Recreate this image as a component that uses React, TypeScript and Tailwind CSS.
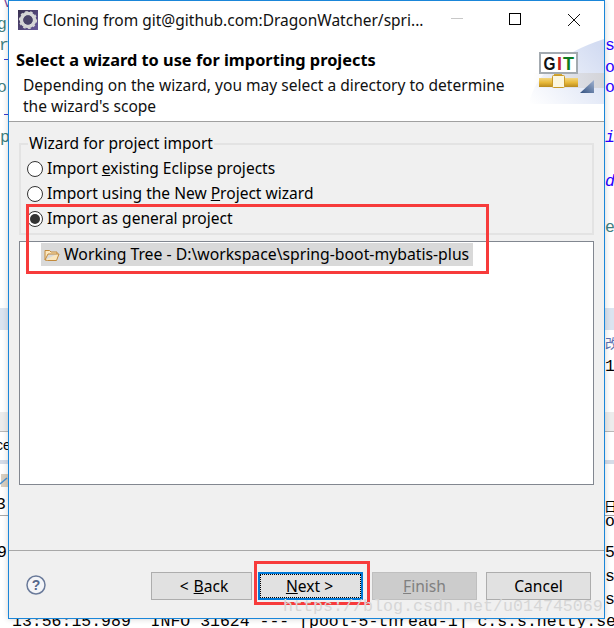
import type { ReactNode } from "react";

const sans = "font-['Noto_Sans','Open_Sans',sans-serif]";
const mono = "font-['Liberation_Mono',monospace] text-[16.5px] leading-none whitespace-pre";
const teal = mono + " text-[#3f7f7f]";
const blue = mono + " text-[#2a00ff]";
const blueItalic = blue + " italic";
const black = mono + " text-black";

/* One line of the IDE that sits behind the dialog: only its two ends show. */
function Line({ h, left, right, cls = "" }: { h: string; left?: ReactNode; right?: ReactNode; cls?: string }) {
  return (
    <div className={"flex shrink-0 items-center justify-between " + h + " " + cls}>
      <div className="w-[8px] overflow-visible">{left}</div>
      <div className="w-[9px] overflow-visible">{right}</div>
    </div>
  );
}

function IdeBackdrop() {
  return (
    <div className="flex h-full flex-col">
      <Line h="h-[14px]" left={<div className="-mt-[12px] ml-[4px] text-[14px] text-[#7a3fa0]">v</div>} />
      <Line h="h-[22px]" left={<div className={teal + " -ml-[3px]"}>g</div>} />
      <Line h="h-[20px]" left={<div className={teal + " -ml-[1px]"}>r</div>} right={<div className={blue}>s</div>} />
      <Line h="h-[6px]" left={<div className="ml-[4px] h-px w-[4px] bg-[#3a3ad0]" />} />
      <Line h="h-[12px]" right={<div className={blue}>o</div>} />
      <Line h="h-[28px]" left={<div className={teal + " -ml-[3px]"}>or</div>} right={<div className={blue}>o.</div>} />
      <Line h="h-[24px]" left={<div className="ml-[4px] h-px w-[4px] bg-[#3a3ad0]" />} />
      <Line h="h-[24px]" left={<div className={teal}>p</div>} right={<div className={blueItalic}>i</div>} />
      <Line h="h-[64px]" right={<div className={blueItalic}>d</div>} />
      <Line h="h-[28px]" right={<div className={teal}>e</div>} />
      <Line h="h-[66px]" />
      <Line h="h-[22px]" cls="bg-[#dbe4f0]" />
      <Line h="h-[26px]" right={<div className="font-['Noto_Sans_CJK_SC',sans-serif] text-[13px] text-[#5a6fb0]">改</div>} />
      <Line h="h-[22px]" right={<div className={black}>1</div>} />
      <Line h="h-[34px]" />
      <Line h="h-[20px]" cls="border-b border-[#b8b8b8] bg-[#ececec]" />
      <Line h="h-[26px]" left={<div className="-ml-[4px] whitespace-pre font-['Liberation_Sans',sans-serif] text-[14px] leading-none text-black">ce</div>} />
      <div className="h-[2px] shrink-0" />
      <div className="h-[4px] shrink-0 bg-[#d5dce8]" />
      <Line
        h="h-[32px]"
        left={
          <svg width="8" height="15" viewBox="0 0 8 15">
            <rect x="1" y="1" width="8" height="13" fill="#d9cfc0" />
            <path d="M0 11 L7 5" stroke="#4a90d0" strokeWidth="1.5" />
          </svg>
        }
      />
      <Line
        h="h-[20px]"
        cls="border-b border-[#a8a8a8]"
        left={<div className={black + " -ml-[4px]"}>3.</div>}
        right={<div className="-ml-[1px] font-['Noto_Sans_CJK_SC',sans-serif] text-[13px] text-black">日</div>}
      />
      <Line h="h-[12px]" right={<div className={black}>o.</div>} />
      <div className="h-[13px] shrink-0" />
      <Line h="h-[24px]" left={<div className={black + " -ml-[3px]"}>9</div>} right={<div className={black}>5</div>} />
      <Line h="h-[24px]" right={<div className={black}>se</div>} />
      <Line h="h-[22px]" right={<div className={black}>se</div>} />
      <div className="flex flex-1 items-end pl-[12px]">
        <div className={black + " -mb-[2px]"}>13:56:15.989  INFO 31624 --- [pool-5-thread-1] c.s.s.netty.se</div>
      </div>
    </div>
  );
}

function Radio({ on }: { on?: boolean }) {
  return (
    <span className="flex h-[16px] w-[16px] shrink-0 items-center justify-center rounded-full border border-[#333] bg-white">
      {on && <span className="h-[10px] w-[10px] rounded-full bg-[#333]" />}
    </span>
  );
}

function RadioRow({ on, children }: { on?: boolean; children: ReactNode }) {
  return (
    <div className="flex h-[25px] items-center gap-[4px]">
      <Radio on={on} />
      <span className="pt-[1px]">{children}</span>
    </div>
  );
}

function EclipseIcon() {
  return (
    <svg width="20" height="20" viewBox="0 0 20 20" className="-mt-[2px]">
      <defs>
        <linearGradient id="ec" x1="0" y1="0" x2="1" y2="1">
          <stop offset="0" stopColor="#37304f" />
          <stop offset="1" stopColor="#6a5a9c" />
        </linearGradient>
      </defs>
      <rect width="20" height="20" fill="url(#ec)" />
      <circle cx="10" cy="10" r="6.5" fill="none" stroke="#d6d6d6" strokeWidth="3.6" />
      <circle cx="10" cy="10" r="8.4" fill="none" stroke="#d6d6d6" strokeWidth="1.4" strokeDasharray="2.6 2.6" />
      <circle cx="10" cy="10" r="4.6" fill="#4a4468" />
    </svg>
  );
}

function GitLogo() {
  return (
    <svg width="75" height="65" viewBox="0 0 75 65" className="absolute right-0 top-[38px]">
      <defs>
        <linearGradient id="bg" x1="0" y1="1" x2="1" y2="0.2">
          <stop offset="0" stopColor="#ffffff" />
          <stop offset="1" stopColor="#d3dcf2" />
        </linearGradient>
        <linearGradient id="band" x1="0" y1="0" x2="1" y2="0">
          <stop offset="0" stopColor="#d9d9dc" stopOpacity="0" />
          <stop offset="1" stopColor="#d4d4d8" />
        </linearGradient>
        <linearGradient id="pipe" x1="0" y1="0" x2="0" y2="1">
          <stop offset="0" stopColor="#f2d680" />
          <stop offset="0.5" stopColor="#e8b93a" />
          <stop offset="1" stopColor="#b98a1e" />
        </linearGradient>
        <linearGradient id="tri" x1="0" y1="1" x2="1" y2="0">
          <stop offset="0" stopColor="#33517f" />
          <stop offset="1" stopColor="#9fb2d2" />
        </linearGradient>
      </defs>
      <path d="M0 65 Q8 22 75 0 V65 Z" fill="url(#bg)" />
      <rect x="4" y="34" width="71" height="15" fill="url(#band)" />
      <rect x="11" y="14" width="37" height="20" fill="#fff" stroke="#a3aab0" strokeWidth="2" />
      <text x="14.5" y="30.5" fontFamily="Liberation Sans" fontWeight="700" fontSize="18" fill="#111" textLength="12" lengthAdjust="spacingAndGlyphs">G</text>
      <text x="28" y="30.5" fontFamily="Liberation Sans" fontWeight="700" fontSize="18" fill="#c62020">I</text>
      <text x="34" y="30.5" fontFamily="Liberation Sans" fontWeight="700" fontSize="18" fill="#0e7a20" textLength="11" lengthAdjust="spacingAndGlyphs">T</text>
      <rect x="25" y="35" width="8" height="3" fill="#d6a82c" />
      <rect x="10" y="39" width="39" height="9" fill="url(#pipe)" />
      <rect x="23.5" y="36.5" width="12" height="12" rx="1" fill="#fbf6df" stroke="#c99a28" />
      <path d="M51 54 L65 41 V54 Z" fill="url(#tri)" />
    </svg>
  );
}

function Btn({ children, cls }: { children: ReactNode; cls: string }) {
  return <div className={"flex h-[28px] items-center justify-center text-[15.6px] " + cls}>{children}</div>;
}

export default function App() {
  return (
    <div className={"relative h-[628px] w-[614px] overflow-hidden bg-white " + sans}>
      <IdeBackdrop />

      {/* dialog window on the desktop */}
      <div className="absolute left-[8px] top-0 flex h-[619px] w-[597px] flex-col border border-[#1a86d9] bg-[#f0f0f0] text-black shadow-[0_0_6px_rgba(0,0,0,0.18)]">
        <div className="relative h-[121px] shrink-0 border-b border-[#a0a0a0] bg-white">
          <div className="flex h-[38px] items-center pl-[9px] pt-[1px] text-[15.5px]">
            <EclipseIcon />
            <span className="ml-[5px] text-[#111]">Cloning from git@github.com:DragonWatcher/spri...</span>
          </div>
          <div className="absolute left-[442px] top-[17px] h-px w-[12px] bg-[#c8c8c8]" />
          <div className="absolute left-[500px] top-[12px] h-[12px] w-[12px] border border-black" />
          <svg width="14" height="14" viewBox="0 0 14 14" className="absolute left-[558px] top-[12px]">
            <path d="M1 1 L13 13 M13 1 L1 13" stroke="#111" strokeWidth="1" fill="none" />
          </svg>
          <div className="pl-[7px] pt-[9px] text-[16.35px] font-bold leading-[24px]">Select a wizard to use for importing projects</div>
          <div className="pl-[14px] pt-[3px] text-[15.55px] leading-[21px] text-[#111]">
            Depending on the wizard, you may select a directory to determine
            <br />
            the wizard's scope
          </div>
          <GitLogo />
        </div>

        <div className="flex flex-1 flex-col px-[10px] pt-[21px]">
          <div className="relative h-[92px] border-2 border-[#e3e3e3] pl-[6px] pt-[11px] text-[15.55px]">
            <span className="absolute left-[7px] top-[-12px] bg-[#f0f0f0] px-[1px] leading-[20px]">Wizard for project import</span>
            <RadioRow>Import <u>e</u>xisting Eclipse projects</RadioRow>
            <RadioRow>Import using the New <u>P</u>roject wizard</RadioRow>
            <RadioRow on>Import as <u>g</u>eneral project</RadioRow>
          </div>
          <div className="mt-[6px] h-[244px] border border-[#828790] bg-white pl-[21px] pt-[1px]">
            <div className="flex h-[23px] w-[432px] items-center gap-[4px] bg-[#d9d9d9] pl-[3px] text-[15.78px]">
              <svg width="16" height="14" viewBox="0 0 16 14">
                <path d="M1 12 V2.5 H5.5 L7 4 H13 V6 H4 L1 12 L3.5 12.5 H12.5 L15 6 H13" fill="#fbe7bf" stroke="#c2893a" strokeWidth="1" />
              </svg>
              <span>Working Tree - D:\workspace\spring-boot-mybatis-plus</span>
            </div>
          </div>
        </div>

        <div className="flex h-[68px] shrink-0 items-center border-t border-[#a8a8a8] pl-[17px] pr-[13px]">
          <svg width="20" height="20" viewBox="0 0 20 20">
            <circle cx="10" cy="10" r="9" fill="#f4f5f8" stroke="#6a7a9a" strokeWidth="1.5" />
            <text x="10" y="15" textAnchor="middle" fontFamily="Liberation Sans" fontWeight="700" fontSize="14" fill="#56688c">?</text>
          </svg>
          <div className="ml-auto mt-[2px] flex items-center">
            <Btn cls="w-[101px] border border-[#adadad] bg-[#e1e1e1] pl-[5px] pt-[2px]">
              &lt;<span className="ml-[5px]"><u>B</u>ack</span>
            </Btn>
            <div className="ml-[6px] flex h-[28px] w-[105px] items-center justify-center border-2 border-[#0078d7] bg-[#e1e1e1] pt-[2px] text-[15.6px] outline-1 -outline-offset-3 outline-dotted outline-black">
              <span className="-ml-[2px]"><u>N</u>ext &gt;</span>
            </div>
            <Btn cls="ml-[9px] w-[105px] border border-[#bfbfbf] bg-[#cccccc] pt-[2px] text-[#808080]"><span><u>F</u>inish</span></Btn>
            <Btn cls="ml-[9px] w-[105px] border border-[#adadad] bg-[#e1e1e1] pt-[2px]">Cancel</Btn>
          </div>
        </div>
      </div>

      {/* annotation overlays */}
      <div className="absolute left-[26px] top-[204px] h-[70px] w-[463px] border-[3px] border-[#f73b3b]" />
      <div className="absolute left-[254px] top-[561px] h-[44px] w-[116px] border-[3px] border-[#f73b3b]" />
      <div className="absolute left-[283px] top-[597px] whitespace-pre font-['Liberation_Mono',monospace] text-[16.67px] leading-[20px] text-[#d6d6d6]">https://blog.csdn.net/u014745069</div>
    </div>
  );
}
